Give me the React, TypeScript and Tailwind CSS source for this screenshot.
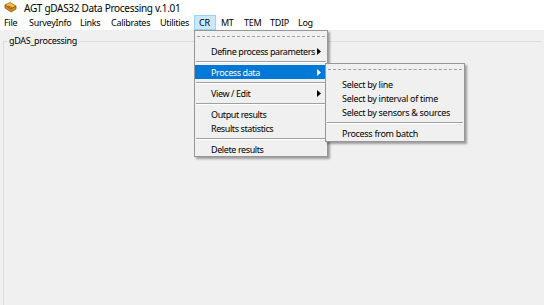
import React from "react";

const Arrow = ({ white }: { white?: boolean }) => (
  <svg width="4" height="7" viewBox="0 0 4 7" className="shrink-0">
    <path d="M0 0 L4 3.5 L0 7 Z" fill={white ? "#ffffff" : "#000000"} />
  </svg>
);

const Sep = () => (
  <div className="h-[7px] flex flex-col justify-center px-[1px]">
    <div className="border-t border-[#a0a0a0] border-b border-b-white" />
  </div>
);

const TearOff = () => (
  <div className="h-[4px] px-[2px] flex items-center">
    <div className="w-full border-t border-dashed border-[#a0a0a0]" />
  </div>
);

const Item = ({
  label,
  arrow,
  active,
}: {
  label: string;
  arrow?: boolean;
  active?: boolean;
}) => (
  <div
    className={
      active
        ? "h-[14px] flex items-center justify-between pl-[16px] pr-[6px] bg-[#0078d7] text-white whitespace-nowrap"
        : "h-[14px] flex items-center justify-between pl-[16px] pr-[6px] text-black whitespace-nowrap"
    }
  >
    <span>{label}</span>
    {arrow ? <Arrow white={active} /> : null}
  </div>
);

export default function App() {
  return (
    <div
      className="relative w-[544px] h-[305px] overflow-hidden bg-[#f0f0f0] text-[9px] leading-none text-black tracking-[-0.3px] whitespace-nowrap"
      style={{ fontFamily: '"Noto Sans", "Open Sans", sans-serif' }}
    >
      {/* Title bar */}
      <div className="h-[15px] bg-white flex items-center pl-[4px] text-[10px]">
        <svg width="13" height="11" viewBox="0 0 13 11" className="mr-[7px]">
          <path d="M1 3 L6 0.5 L12 4 L7 7 Z" fill="#f4c04a" stroke="#a66a10" strokeWidth="0.8" />
          <path d="M1 3 L1 6 L7 10 L12 7 L12 4 L7 7 Z" fill="#d98a1c" stroke="#8a5408" strokeWidth="0.8" />
          <path d="M4 4 L8 5.5" stroke="#7a4a08" strokeWidth="0.8" />
        </svg>
        <span>AGT gDAS32 Data Processing v.1.01</span>
      </div>

      {/* Menu bar */}
      <div className="h-[15px] bg-white flex items-stretch">
        <div className="w-[25px] flex items-center pl-[4px]">File</div>
        <div className="w-[51px] flex items-center pl-[4px]">SurveyInfo</div>
        <div className="w-[31px] flex items-center pl-[4px]">Links</div>
        <div className="w-[49px] flex items-center pl-[4px]">Calibrates</div>
        <div className="w-[38px] flex items-center pl-[4px]">Utilities</div>
        <div className="w-[22px] flex items-center pl-[4px] bg-[#cce8ff] border border-[#99d1ff]">CR</div>
        <div className="w-[24px] flex items-center pl-[5px]">MT</div>
        <div className="w-[26px] flex items-center pl-[4px]">TEM</div>
        <div className="w-[28px] flex items-center pl-[4px]">TDIP</div>
        <div className="w-[26px] flex items-center pl-[4px]">Log</div>
      </div>

      {/* Content: group box */}
      <div className="relative pt-[11px] px-[3px]">
        <div className="h-[300px] border-l border-t border-[#dcdcdc]" />
        <div className="absolute left-[7px] top-[6px] bg-[#f0f0f0] px-[2px]">gDAS_processing</div>
      </div>

      {/* CR dropdown */}
      <div className="absolute left-[194px] top-[30px] w-[134px] h-[127px] bg-[#f0f0f0] border border-[#979797] shadow-[2px_2px_2px_rgba(0,0,0,0.35)] pt-[3px] tracking-[-0.4px]">
        <TearOff />
        <div className="h-[6px]" />
        <Item label="Define process parameters" arrow />
        <Sep />
        <Item label="Process data" arrow active />
        <Sep />
        <Item label="View / Edit" arrow />
        <Sep />
        <Item label="Output results" />
        <Item label="Results statistics" />
        <Sep />
        <Item label="Delete results" />
      </div>

      {/* Process data submenu */}
      <div className="absolute left-[325px] top-[63px] w-[140px] h-[79px] bg-[#f0f0f0] border border-[#979797] shadow-[2px_2px_2px_rgba(0,0,0,0.35)] pt-[3px]">
        <TearOff />
        <div className="h-[6px]" />
        <Item label="Select by line" />
        <Item label="Select by interval of time" />
        <Item label="Select by sensors & sources" />
        <Sep />
        <Item label="Process from batch" />
      </div>
    </div>
  );
}
